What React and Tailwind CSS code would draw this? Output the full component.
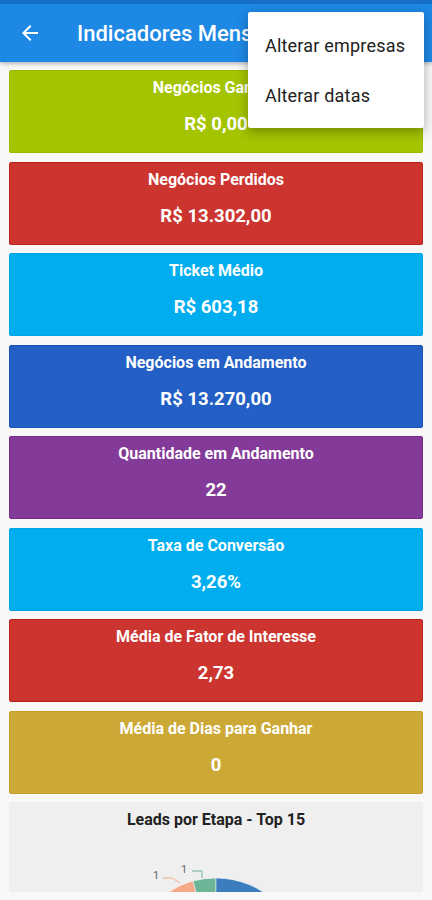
import React from "react";

const cards = [
  { title: "Negócios Ganhos", value: "R$ 0,00", bg: "bg-[#a5c400]", border: "border-[#9ab800]" },
  { title: "Negócios Perdidos", value: "R$ 13.302,00", bg: "bg-[#cc3430]", border: "border-[#c0201c]" },
  { title: "Ticket Médio", value: "R$ 603,18", bg: "bg-[#00aeef]", border: "border-[#00a4e4]" },
  { title: "Negócios em Andamento", value: "R$ 13.270,00", bg: "bg-[#245fc6]", border: "border-[#1a52b8]" },
  { title: "Quantidade em Andamento", value: "22", bg: "bg-[#843a98]", border: "border-[#772a8c]" },
  { title: "Taxa de Conversão", value: "3,26%", bg: "bg-[#00aeef]", border: "border-[#00a4e4]" },
  { title: "Média de Fator de Interesse", value: "2,73", bg: "bg-[#cc3430]", border: "border-[#c0201c]" },
  { title: "Média de Dias para Ganhar", value: "0", bg: "bg-[#cca936]", border: "border-[#c39f28]" },
];

function IndicatorCard({ title, value, bg, border }) {
  return (
    <div className={`h-[83px] shrink-0 rounded-[2px] border ${border} ${bg} flex flex-col items-center pt-[7px] text-white`}>
      <div className="text-[16px] leading-[20px] font-bold">{title}</div>
      <div className="mt-[15px] text-[18.5px] leading-[22px] font-bold">{value}</div>
    </div>
  );
}

function LeadsChart() {
  return (
    <div className="h-[90px] shrink-0 bg-[#efefef] overflow-hidden flex flex-col items-center">
      <div className="pt-[8px] text-[16px] leading-[20px] font-bold text-[#222]">
        Leads por Etapa - Top 15
      </div>
      <svg width="415" height="63" viewBox="0 0 415 63" className="mt-[2px] shrink-0">
        {/* orange slice */}
        <path d="M207 132 L156.5 62.4 A86 86 0 0 1 184 49.1 Z" fill="#f5a987" stroke="#fff" strokeWidth="0.5" />
        {/* green slice */}
        <path d="M207 132 L184 49.1 A86 86 0 0 1 207 46 Z" fill="#6db596" stroke="#fff" strokeWidth="0.5" />
        {/* blue slice */}
        <path d="M207 132 L207 46 A86 86 0 0 1 293 132 Z" fill="#3b7dbd" stroke="#fff" strokeWidth="0.5" />
        <polyline points="154,46 163,46 171,51" fill="none" stroke="#f5a987" strokeWidth="1" />
        <polyline points="183,39 193,39 193,46" fill="none" stroke="#6db596" strokeWidth="1" />
        <text x="147" y="47" fontSize="11" fill="#666" textAnchor="middle" fontFamily="Roboto, sans-serif">1</text>
        <text x="175" y="41" fontSize="11" fill="#666" textAnchor="middle" fontFamily="Roboto, sans-serif">1</text>
      </svg>
    </div>
  );
}

export default function App() {
  return (
    <div className="relative w-[432px] h-[900px] overflow-hidden bg-[#f8f8f8] font-['Roboto',sans-serif]">
      {/* status strip */}
      <div className="h-[4px] bg-[#1670cc]" />

      {/* app bar */}
      <div className="relative z-10 h-[58px] bg-[#1e88e5] flex items-center shadow-[0_2px_4px_rgba(0,0,0,0.25)]">
        <svg width="24" height="24" viewBox="0 0 24 24" className="ml-[18px] shrink-0" fill="#fff">
          <path d="M20 11H7.83l5.59-5.59L12 4l-8 8 8 8 1.41-1.41L7.83 13H20v-2z" />
        </svg>
        <div className="ml-[35px] text-[22px] font-medium text-white whitespace-nowrap">
          Indicadores Mensais
        </div>
      </div>

      {/* indicators */}
      <div className="flex flex-col gap-[8.5px] px-[9px] pt-[8px]">
        {cards.map((c) => (
          <IndicatorCard key={c.title} {...c} />
        ))}
        <LeadsChart />
      </div>

      {/* overflow menu */}
      <div className="absolute z-20 left-[248px] top-[12px] w-[176px] h-[116px] bg-white rounded-[2px] shadow-[0_4px_12px_rgba(0,0,0,0.3)] flex flex-col pt-[8px]">
        <div className="h-[50px] flex items-center pl-[17px] text-[18px] tracking-[0.2px] text-[#212121]">Alterar empresas</div>
        <div className="h-[50px] flex items-center pl-[17px] text-[18px] tracking-[0.2px] text-[#212121]">Alterar datas</div>
      </div>
    </div>
  );
}
